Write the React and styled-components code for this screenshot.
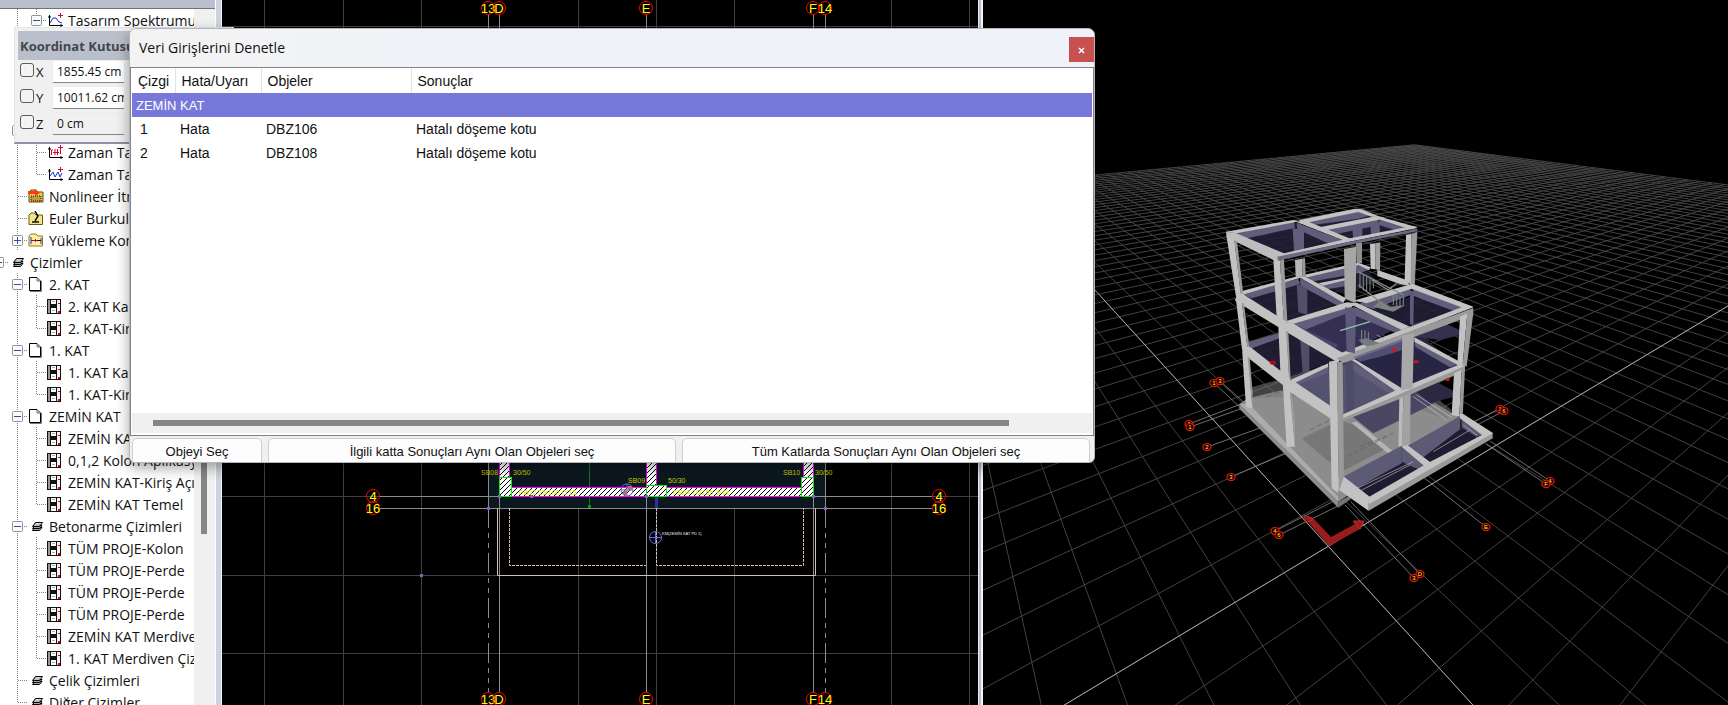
import React from 'react'
import styled, { createGlobalStyle, css } from 'styled-components';

const GlobalStyle = createGlobalStyle`
  html, body, #root {
    height: 100%;
  }
  body {
    margin: 0;
    overflow: hidden;
    background: #000;
    font-family: "Open Sans", "Noto Sans", sans-serif;
    color: #111;
  }
  * {
    box-sizing: border-box;
  }
`;

const Workspace = styled.div`
  position: relative;
  display: grid;
  grid-template-columns: 222px 756fr 5px 745fr;
  height: 100vh;
  overflow: hidden;
`;

/* ---------- project tree ---------- */

const Sidebar = styled.aside`
  display: grid;
  grid-template-columns: 194px 1fr 7px;
  grid-template-rows: 9px 1fr;
  min-height: 0;
  overflow: hidden;
  background: #f0f0f0;
`;

const SidebarCap = styled.div`
  grid-column: 1 / 3;
  background: #b9c0cb;
  border-bottom: 1px solid #6e7178;
`;

const Splitter = styled.div`
  grid-row: 1 / 3;
  grid-column: 3;
  background: #cdd3e0;
  border-left: 1px solid #fff;
  border-right: 1px solid #eef1f8;
`;

const Tree = styled.ul`
  grid-row: 2;
  grid-column: 1;
  margin: 0;
  padding: 0;
  list-style: none;
  overflow: hidden;
  background: #fff;
`;

const TreeRow = styled.li`
  display: flex;
  align-items: center;
  height: 22px;
  margin-left: -11px;
  font-size: 14px;
  white-space: nowrap;
`;

const IconCell = styled.span`
  display: flex;
  flex: none;
  width: 22px;
  padding-left: ${props => props.$inset || 1}px;
`;

const TreeScroll = styled.div`
  grid-row: 2;
  grid-column: 2;
  padding: 20px 7px 0;
`;

const TreeThumb = styled.div`
  width: 6px;
  height: 505px;
  background: #868686;
`;

const GuideSvg = styled.svg`
  flex: none;
`;

const Guide = ({ kind }) => {
  const hasBox = kind === '-' || kind === '+'
  return (
    <GuideSvg width="19" height="22">
      <g stroke="#808080" strokeDasharray="1 1">
        {'|T-+'.includes(kind) && <path d="M9.5 0V22" />}
        {kind === 'L' && <path d="M9.5 0V11" />}
        {kind !== '|' && kind !== ' ' && <path d="M10 11.5H19" />}
      </g>
      {hasBox && (
        <g>
          <rect x="4.5" y="6.5" width="10" height="10" rx="1" fill="#fbfbfb" stroke="#919191" />
          <path d="M6 11.5H13" stroke="#2f4f9f" />
          {kind === '+' && <path d="M9.5 8V15" stroke="#2f4f9f" />}
        </g>
      )}
    </GuideSvg>
  )
}

const icons = {
  drawing: (
    <svg width="15" height="15" shapeRendering="crispEdges">
      <path d="M0 0H14V15H0Z" fill="#111" />
      <path d="M1 1H3V14H1Z" fill="#9a9a9a" />
      <path d="M4 1H9V5H4ZM4 9H9V14H4Z" fill="#fff" />
      <path d="M5 2.500H8M5 11.500H8" stroke="#aaa" />
      <path d="M10 1H13V14H10Z" fill="#f4f4f4" />
      <path d="M11 4H13V5H11ZM11 12H13V14H11Z" fill="#e00000" />
    </svg>
  ),
  page: (
    <svg width="14" height="15">
      <path d="M1.500 .5H9L12.500 4V13.500H1.500Z" fill="#fff" stroke="#000" />
      <path d="M9 1V4H12" fill="#c8c8c8" stroke="#777" />
      <path d="M2 14.500H13.500V4" fill="none" stroke="#777" />
    </svg>
  ),
  stack: (
    <svg width="12" height="11" stroke="#000" fill="#a8a8a8">
      <path d="M.5 9.500L3 6.500H10L7.500 9.500Z" />
      <path d="M.5 7.500L3 4.500H10L7.500 7.500Z" />
      <path d="M.5 5.500L3.500 1.500H10.500L7.500 5.500Z" />
      <path d="M3 4H7M4 2.500H9" stroke="#fff" strokeWidth=".6" />
    </svg>
  ),
  spectrum: (
    <svg width="17" height="15" fill="none">
      <path d="M2.500 2V12.500H16M1 4H4M14 11V14" stroke="#000" />
      <path d="M3 10L6 5H9L12 9L15 10" stroke="#1a2fd0" />
      <path d="M13.500 0V5M11 2.500H16" stroke="#e0002a" />
    </svg>
  ),
  force: (
    <svg width="17" height="15" fill="none">
      <path d="M2.500 2V12.500H16M1 4H4M14 11V14" stroke="#000" />
      <path d="M4.500 10V5H6M8 4V10M10.500 4V10M6 7.500H12" stroke="#e0002a" />
      <path d="M13.500 0V9M11 2.500H16" stroke="#e0002a" />
    </svg>
  ),
  wave: (
    <svg width="17" height="15" fill="none">
      <path d="M2.500 2V12.500H16M1 4H4M14 11V14" stroke="#000" />
      <path d="M3 9L6 5L8 10L11 5L13 10L15 6" stroke="#1a2fd0" />
      <path d="M13.500 0V5M11 2.500H16" stroke="#e0002a" />
    </svg>
  ),
  folderRed: (
    <svg width="16" height="15">
      <path d="M1 3L3 1H8L10 3H15V13H1Z" fill="#e8cf6a" stroke="#5a4a00" />
      <path d="M0 2H7V0L12 4L7 7V5H0Z" fill="#ff3a10" />
      <path d="M3 7H13V12H3Z" fill="#c79a3a" stroke="#111" strokeDasharray="1 1" />
    </svg>
  ),
  folderEuler: (
    <svg width="16" height="15">
      <path d="M1 4L3 2H6L8 4H14.500V13.500H1Z" fill="#f2e58a" stroke="#6a5a10" />
      <path d="M7 0L10 5L7 10M4 11H11" fill="none" stroke="#111" strokeWidth="1.500" />
    </svg>
  ),
  folderLoad: (
    <svg width="16" height="15">
      <path d="M1 3L3 1H8L10 3H14.500V13H1Z" fill="#fff0a0" stroke="#8a7a20" />
      <path d="M3 4V11M13 5V11M3 7.500H6" stroke="#1a2fd0" />
      <path d="M6 7.500H9M7.500 6V9" stroke="#e0002a" />
      <path d="M9 7.500H13" stroke="#111" />
    </svg>
  ),
}

const treeItems = [
  { guides: ' |-', icon: 'spectrum', label: 'Tasarım Spektrumu' },
  { guides: ' ||' },
  { guides: ' ||' },
  { guides: ' ||' },
  { guides: ' ||' },
  { guides: ' -' },
  { guides: ' |T', icon: 'force', label: 'Zaman Tanım Alanı' },
  { guides: ' |L', icon: 'wave', label: 'Zaman Tanım Alanı' },
  { guides: ' T', icon: 'folderRed', label: 'Nonlineer İtme' },
  { guides: ' T', icon: 'folderEuler', label: 'Euler Burkulması' },
  { guides: ' +', icon: 'folderLoad', label: 'Yükleme Kombinasyonları' },
  { guides: '-', icon: 'stack', label: 'Çizimler' },
  { guides: ' -', icon: 'page', label: '2. KAT' },
  { guides: ' |T', icon: 'drawing', label: '2. KAT Kalıp Planı' },
  { guides: ' |L', icon: 'drawing', label: '2. KAT-Kiriş Açılımı' },
  { guides: ' -', icon: 'page', label: '1. KAT' },
  { guides: ' |T', icon: 'drawing', label: '1. KAT Kalıp Planı' },
  { guides: ' |L', icon: 'drawing', label: '1. KAT-Kiriş Açılımı' },
  { guides: ' -', icon: 'page', label: 'ZEMİN KAT' },
  { guides: ' |T', icon: 'drawing', label: 'ZEMİN KAT Kalıp' },
  { guides: ' |T', icon: 'drawing', label: '0,1,2 Kolon Aplikasyon' },
  { guides: ' |T', icon: 'drawing', label: 'ZEMİN KAT-Kiriş Açılımı' },
  { guides: ' |L', icon: 'drawing', label: 'ZEMİN KAT Temel' },
  { guides: ' -', icon: 'stack', label: 'Betonarme Çizimleri' },
  { guides: ' |T', icon: 'drawing', label: 'TÜM PROJE-Kolon' },
  { guides: ' |T', icon: 'drawing', label: 'TÜM PROJE-Perde' },
  { guides: ' |T', icon: 'drawing', label: 'TÜM PROJE-Perde' },
  { guides: ' |T', icon: 'drawing', label: 'TÜM PROJE-Perde' },
  { guides: ' |T', icon: 'drawing', label: 'ZEMİN KAT Merdiven' },
  { guides: ' |L', icon: 'drawing', label: '1. KAT Merdiven Çizimi' },
  { guides: ' T', icon: 'stack', label: 'Çelik Çizimleri' },
  { guides: ' L', icon: 'stack', label: 'Diğer Çizimler' },
]

const ProjectTree = () => (
  <Sidebar>
    <SidebarCap />
    <Splitter />
    <Tree>
      {treeItems.map((item, index) => (
        <TreeRow key={index}>
          {item.guides.split('').map((kind, i) => <Guide key={i} kind={kind} />)}
          {item.icon && <IconCell $inset={item.icon === 'stack' ? 5 : 1}>{icons[item.icon]}</IconCell>}
          {item.label}
        </TreeRow>
      ))}
    </Tree>
    <TreeScroll>
      <TreeThumb />
    </TreeScroll>
  </Sidebar>
)

/* ---------- coordinate box ---------- */

const CoordBox = styled.section`
  position: absolute;
  left: 14px;
  top: 27px;
  width: 220px;
  height: 117px;
  padding: 3px;
  background: #f0f0f0;
  border: 1px solid #e3e6f2;
  border-bottom: 2px solid #8d93a0;
`;

const CoordTitle = styled.h2`
  margin: 0;
  padding-left: 2px;
  height: 29px;
  line-height: 30px;
  font-size: 13px;
  white-space: nowrap;
  color: #45464b;
  background: #b9c0cb;
`;

const CoordRow = styled.div`
  display: flex;
  align-items: flex-start;
  height: 26px;
  padding-left: 2px;
  font-size: 13px;
`;

const CoordCheck = styled.input`
  appearance: none;
  flex: none;
  width: 14px;
  height: 14px;
  margin: 3px 2px 0 0;
  border: 1px solid #5c5c5c;
  border-radius: 3px;
  background: #f4f4f4;
`;

const CoordLabel = styled.label`
  width: 16px;
  line-height: 24px;
`;

const CoordInput = styled.input`
  width: 73px;
  height: 23px;
  padding: 0 0 0 4px;
  border: 1px solid #ececec;
  border-bottom-color: #858585;
  border-radius: 2px;
  font-family: inherit;
  font-size: 12px;
  color: #111;
  background: ${props => props.$flat ? '#f0f0f0' : '#fff'};
`;

const coords = [
  { axis: 'X', value: '1855.45 cm' },
  { axis: 'Y', value: '10011.62 cm' },
  { axis: 'Z', value: '0 cm', flat: true },
]

const CoordinateBox = () => (
  <CoordBox>
    <CoordTitle>Koordinat Kutusu</CoordTitle>
    {coords.map(c => (
      <CoordRow key={c.axis}>
        <CoordCheck type="checkbox" id={'lock' + c.axis} />
        <CoordLabel htmlFor={'lock' + c.axis}>{c.axis}</CoordLabel>
        <CoordInput aria-label={c.axis} defaultValue={c.value} $flat={c.flat} />
      </CoordRow>
    ))}
  </CoordBox>
)

/* ---------- check dialog ---------- */

const arial = css`
  font-family: "Liberation Sans", Arial, sans-serif;
`;

const DialogBox = styled.section`
  position: absolute;
  left: 129px;
  top: 28px;
  display: flex;
  flex-direction: column;
  width: 966px;
  height: 435px;
  overflow: hidden;
  border: 1px solid #b4b6bc;
  border-radius: 7px 7px 6px 6px;
  background: #f0f0f2;
`;

const DialogShadow = styled.div`
  position: absolute;
  left: 129px;
  top: 28px;
  width: 966px;
  height: 435px;
  border-radius: 7px;
  box-shadow: 0 5px 14px rgba(0, 0, 0, .35);
`;

const TitleBar = styled.header`
  display: flex;
  align-items: flex-start;
  justify-content: space-between;
  flex: none;
  height: 38px;
  padding-left: 9px;
  background: linear-gradient(to right, #f3f3f3, #f0f2f9 40%);
`;

const Title = styled.h1`
  margin: 0;
  font-size: 14px;
  line-height: 38px;
  font-weight: normal;
`;

const CloseButton = styled.button`
  width: 25px;
  height: 25px;
  margin-top: 8px;
  padding: 0;
  border: 0;
  color: #fff;
  background: #c75050;
`;

const ListFrame = styled.div`
  display: flex;
  flex-direction: column;
  flex: 1;
  padding: 0 1px 2px;
  border: 1px solid #83838c;
  background: #fff;
`;

const ResultTable = styled.table`
  ${arial}
  width: 100%;
  font-size: 14px;
  table-layout: fixed;
  border-collapse: collapse;
`;

const HeadCell = styled.th`
  height: 25px;
  padding: 0 0 0 6px;
  border-left: ${props => props.$first ? 0 : '1px solid #e2e2e2'};
  font-weight: normal;
  text-align: left;
`;

const GroupCell = styled.td`
  height: 24px;
  padding: 0 4px;
  font-size: 13px;
  color: #fff;
  background: #7878db;
`;

const Cell = styled.td`
  height: 24px;
  padding: 0 0 0 ${props => props.$first ? 8 : 5}px;
`;

const HScroll = styled.div`
  flex: none;
  height: 20px;
  margin-top: auto;
  padding: 7px 83px 0 21px;
  background: #f0f0f0;
`;

const HThumb = styled.div`
  height: 6px;
  background: #868686;
`;

const ButtonBar = styled.footer`
  display: grid;
  grid-template-columns: 130px 408fr 408fr;
  gap: 6px;
  flex: none;
  height: 26px;
  padding: 2px 4px 0 2px;
`;

const ActionButton = styled.button`
  ${arial}
  height: 30px;
  padding: 0 0 4px;
  border: 1px solid #d0d0d0;
  border-radius: 5px;
  font-size: 13px;
  color: #111;
  background: #fdfdfd;
`;

const results = [
  { line: 1, type: 'Hata', object: 'DBZ106', result: 'Hatalı döşeme kotu' },
  { line: 2, type: 'Hata', object: 'DBZ108', result: 'Hatalı döşeme kotu' },
]

const columns = [
  { title: 'Çizgi', width: 43 },
  { title: 'Hata/Uyarı', width: 86 },
  { title: 'Objeler', width: 150 },
  { title: 'Sonuçlar' },
]

const CheckDialog = () => (
  <DialogBox role="dialog" aria-label="Veri Girişlerini Denetle">
    <TitleBar>
      <Title>Veri Girişlerini Denetle</Title>
      <CloseButton aria-label="Kapat">
        <svg width="7" height="7"><path d="M1 1L6 6M6 1L1 6" stroke="#fff" strokeWidth="1.500" /></svg>
      </CloseButton>
    </TitleBar>
    <ListFrame>
      <ResultTable>
        <colgroup>
          {columns.map(c => <col key={c.title} width={c.width} />)}
        </colgroup>
        <thead>
          <tr>
            {columns.map((c, i) => <HeadCell key={c.title} $first={i === 0}>{c.title}</HeadCell>)}
          </tr>
        </thead>
        <tbody>
          <tr>
            <GroupCell colSpan={4}>ZEMİN KAT</GroupCell>
          </tr>
          {results.map(r => (
            <tr key={r.line}>
              <Cell $first>{r.line}</Cell>
              <Cell>{r.type}</Cell>
              <Cell>{r.object}</Cell>
              <Cell>{r.result}</Cell>
            </tr>
          ))}
        </tbody>
      </ResultTable>
      <HScroll><HThumb /></HScroll>
    </ListFrame>
    <ButtonBar>
      <ActionButton>Objeyi Seç</ActionButton>
      <ActionButton>İlgili katta Sonuçları Aynı Olan Objeleri seç</ActionButton>
      <ActionButton>Tüm Katlarda Sonuçları Aynı Olan Objeleri seç</ActionButton>
    </ButtonBar>
  </DialogBox>
)

/* ---------- plan view ---------- */

const Canvas = styled.svg`
  display: block;
  width: 100%;
  height: 100%;
  min-height: 0;
  background: #000;
  font-family: "Liberation Sans", Arial, sans-serif;
`;

const PaneSplitter = styled.div`
  background: #b8bed0;
  border-left: 1px solid #e8ebf4;
  border-right: 2px solid #f4f6fb;
`;

const planBubbles = [
  [488, 8, '13'], [499, 8, 'D'], [646, 8, 'E'], [813, 8, 'F'], [825, 8, '14'],
  [488, 699, '13'], [499, 699, 'D'], [646, 699, 'E'], [813, 699, 'F'], [825, 699, '14'],
  [373, 496, '4'], [373, 508, '16'], [939, 496, '4'], [939, 508, '16'],
]

const planLabels = [
  [481, 475, 'SB08'], [513, 475, '30/50'], [628, 483, 'SB09'], [668, 483, '50/30'],
  [783, 475, 'SB10'], [815, 475, '30/50'],
]

const planNodes = [[499, 496], [531, 496], [488, 508], [646, 496], [813, 496], [825, 508], [421, 575]]

const PlanView = () => (
  <Canvas viewBox="222 0 756 705" preserveAspectRatio="xMidYMid slice">
    <defs>
      <pattern id="hatch" width="5" height="5" patternUnits="userSpaceOnUse">
        <rect width="5" height="5" fill="#fff" />
        <path d="M-1 6L6 -1M-1 1L1 -1M4 6L6 4" stroke="#000" />
      </pattern>
    </defs>
    <g stroke="#404040">
      {[264.5, 343.5, 421.5, 578.5, 656.5, 734.5, 891.5, 969.5].map(x => <path key={x} d={`M${x} 0V705`} />)}
      {[26.5, 496.5, 575.5, 653.5].map(y => <path key={y} d={`M222 ${y}H978`} />)}
    </g>
    <rect x="488" y="400" width="337" height="108" fill="#0c1820" />
    <g stroke="#8c8c8c">
      <path d="M380 496.500H932M380 508.500H932M499.500 15V692M646.500 15V692M813.500 15V692M488.500 15V508M825.500 15V508" />
      <path d="M488.500 508V692M825.500 508V692" strokeDasharray="20 5 5 5 5 5" />
    </g>
    <g fill="none" stroke="#cfc0b6">
      <path d="M497.500 508V575.500H815.500V508" />
      <path d="M509.500 508V565.500H646M656.500 508V565.500H803.500V508" strokeDasharray="3 1" />
    </g>
    <path d="M589.500 440V507" stroke="#0f7a1c" />
    <rect x="588" y="505" width="3" height="3" fill="#0f8a1c" />
    <rect x="655" y="497" width="3" height="11" fill="#3030a0" />
    <g fill="url(#hatch)" stroke="#f0f">
      <rect x="511.500" y="487.500" width="290" height="9" />
      <rect x="499.500" y="440.500" width="10" height="37" />
      <rect x="646.500" y="440.500" width="10" height="45" />
      <rect x="803.500" y="440.500" width="10" height="37" />
    </g>
    <g fill="url(#hatch)" stroke="#0e0">
      <rect x="499.500" y="477.500" width="12" height="19" />
      <rect x="646.500" y="485.500" width="20" height="11" />
      <rect x="801.500" y="477.500" width="12" height="19" />
    </g>
    <g fill="#c8c800" fontSize="7">
      {planLabels.map(([x, y, t]) => <text key={t + x} x={x} y={y}>{t}</text>)}
    </g>
    <g fill="#e6e600" fontSize="7">
      <text x="519" y="495">PB02 25/100 O 15</text>
      <text x="673" y="495">PB04 78/156 3/48</text>
    </g>
    <circle cx="627" cy="490" r="6" fill="none" stroke="#6a6ad8" />
    <path d="M627 484V496M621 490H633" stroke="#6a6ad8" />
    <path d="M628 486H632V490H628ZM623 491H627V495H623Z" fill="#c86464" />
    <circle cx="655.500" cy="537.500" r="6" fill="none" stroke="#6a6ad8" />
    <path d="M655.500 531V544M649 537.500H662" stroke="#6a6ad8" />
    <text x="662" y="535" fontSize="4" fill="#e8e8e8">KM(ZEMİN KAT PD 1)</text>
    {planNodes.map(([x, y]) => <rect key={x} x={x - 1} y={y - 1} width="3" height="3" fill="#8a5cc8" />)}
    {planBubbles.map(([x, y, t], i) => (
      <g key={i}>
        <circle cx={x} cy={y} r="6.500" fill="none" stroke="#f00" />
        <text x={x} y={y + 5} fontSize="13" textAnchor="middle" fill="#ff0">{t}</text>
      </g>
    ))}
  </Canvas>
)

/* ---------- 3D view ---------- */

// ground plane (u, v) -> view, through the two vanishing points of the horizon
const project = (u, v) => {
  const a = 0.0536 * u
  const b = 0.069 * v
  const w = 1 + a + b
  return [(1328.3 + 2105 * a + 903 * b) / w, (546.3 + 79.3 * (a + b)) / w]
}

const GRID = 50
const W_MIN = 0.2

const groundLine = (p, q) => {
  const [x1, y1] = project(...p)
  const [x2, y2] = project(...q)
  return `M${x1.toFixed(1)} ${y1.toFixed(1)}L${x2.toFixed(1)} ${y2.toFixed(1)}`
}

const lineU = k => {
  const start = Math.max(-GRID, (W_MIN - 1 - 0.0536 * k) / 0.069)
  return start < GRID ? groundLine([k, start], [k, GRID]) : ''
}

const lineV = k => {
  const start = Math.max(-GRID, (W_MIN - 1 - 0.069 * k) / 0.0536)
  return start < GRID ? groundLine([start, k], [GRID, k]) : ''
}

const steps = Array.from({ length: GRID * 2 + 1 }, (_, i) => i - GRID)
const gridPath = steps.map(k => lineU(k) + lineV(k)).join('')

const axisBubbles = [
  [1214, 383, '1'], [1220, 381, '3'], [1189, 424, 'A'], [1190, 427, '1'], [1207, 447, '2'],
  [1231, 477, '3'], [1275, 531, '4'], [1279, 535, '6'], [1420, 574, 'D'], [1414, 578, '3'],
  [1486, 527, 'E'], [1550, 481, '4'], [1546, 484, 'F'], [1500, 409, '1'], [1504, 411, '6'],
]

const LIGHT = '#c2c2c2'
const MID = '#9a9a9a'
const GLASS = '#615e7b'
const DARK = 'rgba(34, 30, 54, .9)'

// building faces, listed from the back to the front
const faces = [
  // foundation and ground slab
  ['#8c8c8c', '178,672 205,655 300,632 540,590 715,640 852,720 475,965'],
  ['rgba(120, 120, 120, .55)', '215,622 300,598 360,575 540,560 700,600 815,690 800,720 600,640 215,655'],
  ['#777', '365,775 480,720 520,735 620,805 495,870 440,840'],
  ['#acacac', '200,672 215,680 440,915 455,930 475,950 475,965 178,672'],
  ['#8e8e8e', '178,672 475,965 475,983 178,686'],
  ['#757575', '475,965 512,945 512,958 475,983'],
  ['#b4b4b4', '515,728 530,725 665,835 650,842'],
  // level 1, rear
  [DARK, '205,500 300,462 450,440 470,540 330,590 300,585'],
  [GLASS, '195,490 300,458 300,474 215,505'],
  ['#504d69', '360,470 388,460 388,575 368,580'],
  ['rgba(64, 60, 96, .8)', '330,590 500,545 500,610 345,610'],
  ['#353053', '340,435 505,380 640,450 480,530 450,520'],
  [DARK, '560,395 690,350 860,380 700,445 670,440'],
  ['#282544', '520,530 700,450 835,555 700,612 655,628'],
  ['#34304e', '700,430 760,415 840,450 838,466 780,480 700,470'],
  ['#55526f', '340,610 470,560 520,545 655,632 490,705 460,690'],
  [GLASS, '335,600 445,558 445,578 350,615'],
  ['#4a4763', '518,710 740,620 825,640 580,760'],
  ['#2b2840', '695,625 760,600 825,635 822,650 750,670'],
  ['#4e4b68', '497,530 525,525 522,690 500,700'],
  // level 2, rear
  [DARK, '190,345 355,302 490,365 325,425 300,412'],
  [DARK, '380,290 540,255 590,300 500,345 430,320'],
  [GLASS, '185,342 355,296 360,312 215,355'],
  [LIGHT, '172,337 355,288 362,293 188,344'],
  [GLASS, '375,290 530,256 570,268 540,279 400,304'],
  [LIGHT, '368,286 535,248 572,262 567,270 535,256 382,292'],
  [GLASS, '420,318 500,300 500,318 440,328'],
  [LIGHT, '415,310 500,293 500,300 428,317'],
  [GLASS, '360,295 495,370 475,378 362,318'],
  [LIGHT, '355,290 372,288 498,355 490,368'],
  ['#524f6b', '350,312 382,325 382,405 355,396'],
  [LIGHT, '592,270 680,300 690,318 660,312 592,288'],
  // columns behind
  ['#b6b6b6', '345,240 366,236 368,290 347,290'],
  [MID, '366,236 375,234 377,290 368,290'],
  ['#8f8f8f', '528,190 546,186 546,250 530,250'],
  [LIGHT, '570,192 586,190 586,268 572,266'],
  ['#a0a0a0', '586,190 601,187 600,272 586,268'],
  // roof
  [DARK, '165,160 350,128 480,180 300,222'],
  [DARK, '390,130 535,98 590,112 420,145'],
  [DARK, '440,158 600,120 690,145 510,175'],
  [GLASS, '338,145 372,150 372,206 342,213'],
  [GLASS, '517,148 547,143 547,170 520,176'],
  [GLASS, '571,130 598,126 600,160 573,165'],
  [GLASS, '165,160 342,126 345,144 190,177'],
  [LIGHT, '138,155 340,120 360,124 170,160'],
  [GLASS, '375,122 535,94 580,104 535,116 395,136'],
  [LIGHT, '355,121 525,86 545,88 600,110 575,110 535,96 378,128'],
  [GLASS, '430,150 595,118 595,136 455,165'],
  [GLASS, '600,118 680,142 645,150 595,134'],
  [LIGHT, '410,143 590,108 612,112 605,118 430,152'],
  [GLASS, '350,128 500,185 450,193 352,148'],
  [LIGHT, '350,126 372,120 512,176 495,183'],
  [LIGHT, '600,110 712,142 690,148 585,114'],
  ['#bdbdbd', '138,155 165,158 312,220 312,242 280,240 140,172'],
  [LIGHT, '292,224 495,178 700,137 712,144 505,186 298,232'],
  ['#6d6a86', '292,230 505,186 712,146 712,154 510,194 294,242'],
  // roof columns
  [LIGHT, '139,165 163,178 183,345 168,350'],
  [MID, '163,180 171,184 190,342 182,346'],
  [LIGHT, '280,238 300,242 312,430 290,415'],
  [MID, '300,242 312,240 322,425 312,430'],
  ['#a6a6a6', '492,207 529,200 527,370 494,355'],
  [LIGHT, '678,165 694,162 694,315 674,300'],
  [MID, '694,162 712,156 704,318 692,315'],
  // level 2, front block
  [GLASS, '325,434 510,374 525,390 360,455'],
  ['#48456a', '355,438 475,495 465,505 345,448'],
  [LIGHT, '312,425 500,367 530,370 515,380 338,432'],
  [GLASS, '535,372 690,328 690,346 580,388'],
  [LIGHT, '520,362 695,312 715,320 560,370'],
  [GLASS, '700,328 855,385 830,396 700,348'],
  [LIGHT, '700,312 880,380 860,388 690,325'],
  [GLASS, '520,380 680,448 655,462 515,402'],
  [LIGHT, '510,372 530,368 690,440 665,450'],
  [LIGHT, '312,425 338,430 490,520 475,548 318,455'],
  [LIGHT, '475,522 860,376 880,382 485,535'],
  [MID, '470,535 880,384 880,405 490,550'],
  ['rgba(98, 94, 132, .75)', '520,532 700,464 700,500 600,530 540,545'],
  ['#5d5a79', '495,382 528,388 525,520 500,515'],
  ['#5d5a79', '690,330 702,335 700,440 690,430'],
  // lower left block
  [LIGHT, '170,345 185,340 315,422 318,455 165,362'],
  [LIGHT, '168,360 186,368 203,510 186,508'],
  [MID, '186,368 192,370 208,505 203,510'],
  [LIGHT, '295,440 320,450 328,605 302,595'],
  [MID, '318,452 325,455 332,600 328,605'],
  [LIGHT, '187,500 210,500 330,595 325,628 187,520'],
  [LIGHT, '187,518 205,528 217,685 198,680'],
  [MID, '203,530 209,532 218,640 217,685'],
  [LIGHT, '308,605 328,615 345,800 320,800'],
  [MID, '328,615 334,620 345,730 345,800'],
  // level 1, front block
  [LIGHT, '330,600 445,550 445,560 345,608'],
  [GLASS, '345,608 455,680 450,690 335,620'],
  [LIGHT, '325,600 340,602 455,680 450,715 325,632'],
  [GLASS, '520,548 660,635 635,645 520,572'],
  [LIGHT, '515,540 525,538 670,628 655,638'],
  [GLASS, '705,482 835,552 810,562 705,500'],
  [LIGHT, '703,472 845,548 835,556 703,485'],
  [MID, '485,715 660,635 855,555 855,572 665,655 490,722'],
  [LIGHT, '485,705 655,628 850,548 855,558 660,642 488,715'],
  ['#a8a8a8', '667,467 702,460 698,625 663,630'],
  ['#bababa', '658,655 670,650 666,800 655,800'],
  ['#a2a2a2', '670,650 692,640 690,795 666,800'],
  [LIGHT, '840,410 862,400 848,552 832,555'],
  [MID, '862,400 880,398 860,560 848,555'],
  [LIGHT, '822,580 845,570 838,710 815,705'],
  [MID, '845,570 855,565 848,710 838,710'],
  // lower terrace
  [DARK, '490,900 665,800 740,855 565,955'],
  [DARK, '680,800 840,712 900,765 745,850'],
  ['#5d5a75', '490,890 665,797 665,850 530,925'],
  ['#5d5a75', '665,800 735,858 715,868 665,845'],
  ['#5d5a75', '680,800 840,708 840,748 730,832'],
  ['#5d5a75', '845,712 910,762 890,770 845,742'],
  [LIGHT, '838,702 850,702 940,760 915,772 840,715'],
  [LIGHT, '665,800 682,795 755,850 735,860'],
  [LIGHT, '475,890 492,890 575,955 565,992 470,925'],
  [MID, '565,965 745,855 938,758 938,775 565,993'],
  [LIGHT, '560,955 745,848 918,758 938,760 750,868 568,972'],
  // front corner column
  [LIGHT, '447,545 472,540 475,940 455,925'],
  [MID, '472,545 488,545 492,890 476,935'],
]

const View3D = () => (
  <Canvas viewBox="983 0 745 705" preserveAspectRatio="xMidYMid slice">
    <path d={gridPath} fill="none" stroke="#4a4a4a" strokeWidth=".9" />
    <path d={lineU(0) + lineV(0)} fill="none" stroke="#a8a8a8" />
    <path
      d="M1214 383L1243 410M1220 381L1247 405M1189 424L1241 404M1190 427L1243 408M1207 447L1260 428M1231 477L1287 453M1275 531L1332 502M1279 535L1338 506M1414 578L1345 505M1420 574L1351 502M1486 527L1408 465M1546 484L1486 444M1550 481L1490 441M1500 409L1473 422M1504 411L1477 425"
      stroke="#8a8a8a"
      strokeWidth=".8"
    />
    <g transform="translate(1180 180) scale(.333333)">
      {faces.map(([fill, points], i) => <polygon key={i} points={points} fill={fill} />)}
      <g fill="none" stroke="#5c5c5c" strokeWidth="2">
        <path d="M390 750L450 720M500 830L620 770M260 650L310 632M540 800L640 760" strokeDasharray="16 8" />
        <path d="M700 650L800 720M710 645L815 712" stroke="#c8c8c8" />
      </g>
      <g fill="none" stroke="#b8b8c0" strokeWidth="2">
        <path d="M520 930L700 845M760 815L870 750M530 938L690 855M850 735L890 765" />
      </g>
      <g fill="none" stroke="#858c88" strokeWidth="4">
        <path d="M535 275L640 330M535 315L600 365M640 330L672 345M575 300L625 330L650 310" />
        <path d="M540 280V325M550 285V332M560 290V335M570 295V335M580 305V325M640 345V375M650 345V378M660 350V380M670 350V375M545 450V490M555 450V495M565 455V495M590 465L610 475" strokeWidth="3" />
      </g>
      <path d="M580 380L600 362L632 380L676 375L640 395Z" fill="#7b817d" />
      <path d="M535 480L560 475L600 490L560 500Z" fill="#777b80" />
      <path d="M480 452L570 425" stroke="#8fc4b0" strokeWidth="4" />
      <g fill="none" stroke="#e01010" strokeWidth="4">
        <ellipse cx="278" cy="548" rx="7" ry="4" />
        <ellipse cx="642" cy="510" rx="6" ry="3" />
        <ellipse cx="708" cy="545" rx="6" ry="3" />
        <ellipse cx="803" cy="599" rx="5" ry="2" />
      </g>
    </g>
    <path d="M1303 516L1312 517L1331 537L1355 524L1353 521L1364 521L1360 529L1329 546Z" fill="#981c1c" />
    <path d="M1304 515L1313 519L1306 523ZM1353 521L1364 521L1360 529Z" fill="none" stroke="#c82828" />
    {axisBubbles.map(([x, y, t], i) => (
      <g key={i}>
        <ellipse cx={x} cy={y} rx="4" ry="3.500" fill="#200" stroke="#f01010" strokeWidth="1.200" />
        <text x={x} y={y + 2} fontSize="6" textAnchor="middle" fill="#ff0">{t}</text>
      </g>
    ))}
  </Canvas>
)

const App = () => (
  <Workspace>
    <GlobalStyle />
    <ProjectTree />
    <PlanView />
    <PaneSplitter />
    <View3D />
    <CoordinateBox />
    <DialogShadow />
    <CheckDialog />
  </Workspace>
)

export default App
